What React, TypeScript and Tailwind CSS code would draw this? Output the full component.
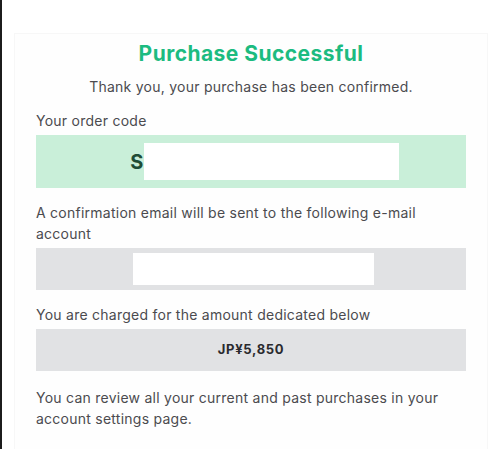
export default function App() {
  return (
    <div className="min-h-[449px] w-[493px] bg-white border-l-2 border-[#1c1c1c] pl-[12px] pr-[5px] pt-[33px] font-['Inter',sans-serif] text-[#4b4b4f] tracking-[0.25px]">
      <div className="bg-[#fefefe] border-x border-t border-[#f7f7f7] px-[21px] pt-[6px] pb-[20px] min-h-[416px]">
        <h1 className="text-center text-[21px] leading-[28px] font-bold tracking-[0.45px] text-[#1cbb80]">
          Purchase Successful
        </h1>
        <p className="mt-[8px] text-center text-[14px] leading-[21px]">
          Thank you, your purchase has been confirmed.
        </p>

        <p className="mt-[13px] text-[14px] leading-[21px]">Your order code</p>
        <div className="mt-[4px] h-[53px] bg-[#c9efd9] flex items-center justify-center pl-[27px]">
          <span className="text-[20px] font-bold text-[#1f4d36]">S</span>
          <span className="h-[37px] w-[255px] bg-white" />
        </div>

        <p className="mt-[14px] text-[14px] leading-[21px]">
          A confirmation email will be sent to the following e-mail account
        </p>
        <div className="mt-[4px] h-[42px] bg-[#e1e2e4] flex items-center pl-[97px]">
          <span className="h-[32px] w-[241px] bg-white" />
        </div>

        <p className="mt-[14px] text-[14px] leading-[21px]">
          You are charged for the amount dedicated below
        </p>
        <div className="mt-[4px] h-[42px] bg-[#e1e2e4] flex items-center justify-center">
          <span className="text-[13px] font-bold tracking-[0.7px] text-[#2a2a2e]">JP¥5,850</span>
        </div>

        <p className="mt-[16px] text-[14px] leading-[21px]">
          You can review all your current and past purchases in your account settings page.
        </p>
      </div>
    </div>
  );
}
